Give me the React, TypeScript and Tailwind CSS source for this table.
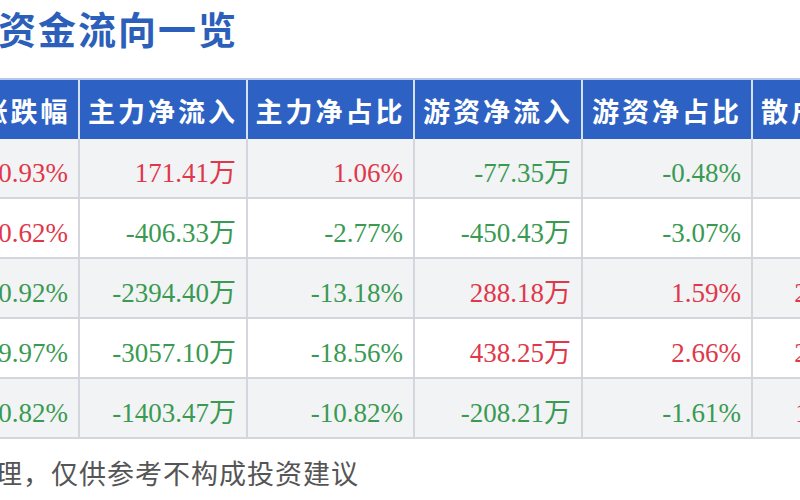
import React from "react";

const cols = [107, 168, 167, 168, 170, 168];
const headers = ["涨跌幅", "主力净流入", "主力净占比", "游资净流入", "游资净占比", "散户净流入"];
type Cell = { t: string; up: boolean };
const rows: Cell[][] = [
  [
    { t: "10.93%", up: true },
    { t: "171.41万", up: true },
    { t: "1.06%", up: true },
    { t: "-77.35万", up: false },
    { t: "-0.48%", up: false },
    { t: "-94.06万", up: false },
  ],
  [
    { t: "10.62%", up: true },
    { t: "-406.33万", up: false },
    { t: "-2.77%", up: false },
    { t: "-450.43万", up: false },
    { t: "-3.07%", up: false },
    { t: "856.76万", up: true },
  ],
  [
    { t: "-10.92%", up: false },
    { t: "-2394.40万", up: false },
    { t: "-13.18%", up: false },
    { t: "288.18万", up: true },
    { t: "1.59%", up: true },
    { t: "2106.22万", up: true },
  ],
  [
    { t: "-9.97%", up: false },
    { t: "-3057.10万", up: false },
    { t: "-18.56%", up: false },
    { t: "438.25万", up: true },
    { t: "2.66%", up: true },
    { t: "2618.85万", up: true },
  ],
  [
    { t: "-10.82%", up: false },
    { t: "-1403.47万", up: false },
    { t: "-10.82%", up: false },
    { t: "-208.21万", up: false },
    { t: "-1.61%", up: false },
    { t: "1611.68万", up: true },
  ],
];

export default function App() {
  return (
    <div className="w-[800px] h-[500px] overflow-hidden bg-white relative">
      <div
        className="ml-[-2px] pt-[6px] h-[72px] text-[38px] leading-[44px] font-bold tracking-[2px] text-[#2c5fb9] whitespace-nowrap"
        style={{ fontFamily: '"Noto Sans CJK SC", sans-serif' }}
      >
        资金流向一览
      </div>
      <div className="ml-[-27px] w-[960px] border-t-[6px] border-[#ffffff]">
        <div className="flex h-[61px] bg-[#2d62c4] border-t-2 border-[#b3c6ea]">
          {headers.map((h, i) => (
            <div
              key={h}
              className="shrink-0 flex items-center justify-center border-r-2 border-[#d6e0f3] text-white font-bold text-[27px] tracking-[3px] whitespace-nowrap pt-[3px]"
              style={{ width: cols[i], fontFamily: '"Noto Sans CJK SC", sans-serif' }}
            >
              {h}
            </div>
          ))}
        </div>
        {rows.map((r, ri) => (
          <div
            key={ri}
            className={`flex h-[60px] border-b-2 border-[#d3d6dc] ${ri % 2 === 0 ? "bg-[#f2f3f5]" : "bg-white"}`}
          >
            {r.map((c, ci) => (
              <div
                key={ci}
                className={`shrink-0 flex items-center justify-end pr-[10px] pt-[10px] border-r-2 border-[#d3d6dc] text-[27px] whitespace-nowrap ${c.up ? "text-[#e0384a]" : "text-[#3a9a52]"}`}
                style={{ width: cols[ci], fontFamily: '"Liberation Serif", "Noto Sans CJK SC", serif' }}
              >
                {c.t}
              </div>
            ))}
          </div>
        ))}
      </div>
      <div
        className="ml-[-33px] mt-[16px] text-[27px] leading-[36px] tracking-[1px] text-[#555555] whitespace-nowrap"
        style={{ fontFamily: '"Noto Sans CJK SC", sans-serif' }}
      >
        整理，仅供参考不构成投资建议
      </div>
    </div>
  );
}
